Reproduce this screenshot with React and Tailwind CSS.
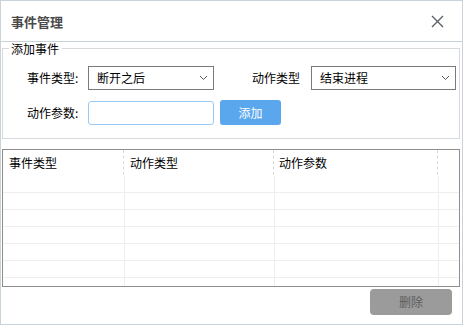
import React from 'react';

const Chevron = () => (
  <svg width="9" height="6" viewBox="0 0 9 6" className="shrink-0">
    <path d="M1 1 L4.5 4.5 L8 1" fill="none" stroke="#555" strokeWidth="1" />
  </svg>
);

const Select = ({ value, width }) => (
  <div className={`${width} h-[24px] border border-[#7a7a7a] bg-white flex items-center justify-between pl-[8px] pr-[5px]`}>
    <span>{value}</span>
    <Chevron />
  </div>
);

const rows = [0, 1, 2, 3, 4, 5, 6];

const App = () => {
  return (
    <div className="w-[463px] h-[327px] bg-white text-[12px] leading-none text-black" style={{ fontFamily: '"Noto Sans CJK SC", "Noto Sans", sans-serif' }}>
      <div className="w-[463px] h-[325px] border border-[#cbd3da] flex flex-col">
        {/* title bar */}
        <div className="h-[41px] shrink-0 border-b border-[#c9d1d8] flex items-center justify-between pl-[10px] pr-[18px]">
          <span className="text-[13px] font-bold text-[#4a4a4a]">事件管理</span>
          <svg width="13" height="13" viewBox="0 0 13 13">
            <path d="M1 1 L12 12 M12 1 L1 12" stroke="#5b6168" strokeWidth="1.4" />
          </svg>
        </div>

        {/* group box */}
        <div className="relative mt-[6px] ml-[1px] mr-[2px] h-[91px] shrink-0 border border-[#d6dadd] pt-[17px] pl-[24px]">
          <span className="absolute left-[6px] top-[-7px] bg-white pl-[2px] pr-[3px] text-[12px] leading-[13px]">添加事件</span>
          <div className="flex items-center">
            <span className="w-[61px]">事件类型:</span>
            <Select value="断开之后" width="w-[126px]" />
            <span className="ml-[38px] w-[59px]">动作类型</span>
            <Select value="结束进程" width="w-[145px]" />
          </div>
          <div className="flex items-center mt-[10px]">
            <span className="w-[61px]">动作参数:</span>
            <div className="w-[126px] h-[24px] border border-[#9ccaf6] rounded-[3px] bg-white" />
            <div className="ml-[6px] w-[61px] h-[25px] rounded-[3px] bg-[#5ba7ee] text-white flex items-center justify-center">添加</div>
          </div>
        </div>

        {/* table */}
        <div className="mt-[10px] ml-[1px] mr-[2px] h-[138px] shrink-0 border border-[#8e8e8e] overflow-hidden">
          <div className="flex h-[26px]">
            <div className="w-[121px] pl-[6px] pt-[7px] border-r border-dashed border-[#d8d8d8] h-[25px]">事件类型</div>
            <div className="w-[150px] pl-[6px] pt-[7px] border-r border-dashed border-[#d8d8d8] h-[25px]">动作类型</div>
            <div className="w-[164px] pl-[5px] pt-[7px] border-r border-dashed border-[#d8d8d8] h-[25px]">动作参数</div>
            <div className="flex-1" />
          </div>
          {rows.map(r => (
            <div key={r} className="flex h-[17px] border-b border-[#eeeeee]">
              <div className="w-[122px] border-r border-[#eeeeee]" />
              <div className="w-[150px] border-r border-[#eeeeee]" />
              <div className="w-[164px] border-r border-[#eeeeee]" />
              <div className="flex-1" />
            </div>
          ))}
        </div>

        <div className="flex justify-end mt-[2px] mr-[10px]">
          <div className="w-[82px] h-[26px] rounded-[4px] bg-[#9b9b9b] text-[#5e5e5e] flex items-center justify-center">删除</div>
        </div>
      </div>
    </div>
  );
};

export default App;
